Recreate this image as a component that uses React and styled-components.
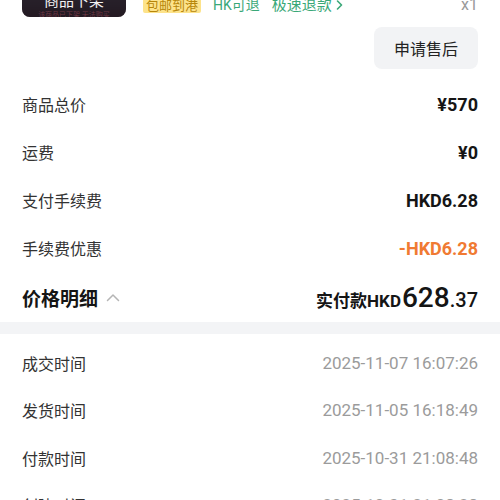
import { createGlobalStyle, styled } from 'styled-components';

const Global = createGlobalStyle`
html, body {
  margin: 0;
  padding: 0;
  background: #ffffff;
  overflow: hidden;
}
body {
  font-family: Roboto, "Noto Sans CJK SC", sans-serif;
  color: #222;
}
`

const Page = styled.div`
width: 500px;
height: 500px;
overflow: hidden;
`

const Card = styled.div`
display: flex;
align-items: stretch;
gap: 17px;
padding: 0 22px;
margin-top: -87px;
`

const Thumb = styled.div`
position: relative;
flex: none;
width: 104px;
height: 104px;
border-radius: 8px;
overflow: hidden;
background: linear-gradient(180deg, #4a4c58 0%, #3a3a47 70%, #2c1f29 100%);
`

const ThumbBadge = styled.div`
position: absolute;
left: 0;
right: 0;
bottom: 0;
height: 26px;
display: flex;
flex-direction: column;
align-items: center;
color: #f2f2f2;
font-size: 15px;
line-height: 20px;
background: rgba(30, 22, 30, 0.55);

span {
  font-size: 7px;
  line-height: 8px;
  color: rgba(200, 90, 110, 0.45);
}
`

const Info = styled.div`
flex: 1;
display: flex;
align-items: flex-end;
padding-bottom: 4px;
`

const Tags = styled.div`
flex: 1;
display: flex;
align-items: center;
gap: 12px;
`

const Tag = styled.span`
font-size: 13px;
line-height: 15px;
padding: 0 3px;
border-radius: 2px;
background: #fde38b;
color: #b7860a;
`

const Green = styled.span`
display: inline-flex;
align-items: center;
gap: 3px;
font-size: ${({ $size }) => $size || 15}px;
line-height: 16px;
color: #3aa878;
`

const Qty = styled.span`
font-size: 16px;
line-height: 16px;
color: #9a9a9a;
`

const Actions = styled.div`
display: flex;
justify-content: flex-end;
padding: 10px 22px 0;
`

const Button = styled.button`
height: 42px;
padding: 0 20px;
border: none;
border-radius: 8px;
background: #f2f3f5;
color: #222;
font-family: "Noto Sans CJK SC", sans-serif;
font-size: 16px;
`

const List = styled.div`
padding: ${({ $top }) => $top || 0}px 22px 0;
`

const Row = styled.div`
display: flex;
align-items: center;
justify-content: space-between;
height: ${({ $h }) => $h || 48}px;
`

const Label = styled.span`
font-family: "Noto Sans CJK SC", sans-serif;
font-size: 16px;
color: #333;
`

const Value = styled.span`
font-size: 18px;
font-weight: 700;
color: ${({ $accent }) => $accent ? '#f07a32' : '#151515'};
`

const Time = styled.span`
font-size: 17px;
color: #9b9b9b;
`

const Heading = styled.span`
display: inline-flex;
align-items: center;
gap: 8px;
font-family: "Noto Sans CJK SC", sans-serif;
font-size: 19px;
font-weight: 700;
color: #151515;
`

const Total = styled.span`
display: inline-flex;
align-items: baseline;
color: #151515;
font-weight: 700;
`

const TotalLabel = styled.span`
font-family: Roboto, "Noto Sans CJK SC", sans-serif;
font-size: 17px;
`

const TotalInt = styled.span`
font-size: 28px;
font-weight: 500;
margin-left: 1px;
`

const TotalDec = styled.span`
font-size: 20px;
font-weight: 500;
`

const Band = styled.div`
height: 12px;
background: #f3f4f6;
`

const prices = [
  ['商品总价', '¥570'],
  ['运费', '¥0'],
  ['支付手续费', 'HKD6.28'],
  ['手续费优惠', '-HKD6.28', true],
]

const times = [
  ['成交时间', '2025-11-07 16:07:26'],
  ['发货时间', '2025-11-05 16:18:49'],
  ['付款时间', '2025-10-31 21:08:48'],
  ['创建时间', '2025-10-31 21:08:28'],
]

export default function App() {
  return (
    <Page>
      <Global />
      <Card>
        <Thumb>
          <ThumbBadge>
            商品下架
            <span>该商品已下架 无法购买</span>
          </ThumbBadge>
        </Thumb>
        <Info>
          <Tags>
            <Tag>包邮到港</Tag>
            <Green $size={14}>HK可退</Green>
            <Green>
              极速退款
              <svg width="9" height="12" viewBox="0 0 9 12" fill="none">
                <path d="M2.5 2l4 4-4 4" stroke="#3aa878" strokeWidth="1.6" strokeLinecap="round" strokeLinejoin="round" />
              </svg>
            </Green>
          </Tags>
          <Qty>x1</Qty>
        </Info>
      </Card>

      <Actions>
        <Button type="button">申请售后</Button>
      </Actions>

      <List $top={11}>
        {prices.map(([label, value, accent]) => (
          <Row key={label}>
            <Label>{label}</Label>
            <Value $accent={accent}>{value}</Value>
          </Row>
        ))}
        <Row $h={50}>
          <Heading>
            价格明细
            <svg width="14" height="9" viewBox="0 0 14 9" fill="none">
              <path d="M1.5 7.5L7 2l5.5 5.5" stroke="#b5b5b5" strokeWidth="1.5" strokeLinecap="round" strokeLinejoin="round" />
            </svg>
          </Heading>
          <Total>
            <TotalLabel>实付款HKD</TotalLabel>
            <TotalInt>628</TotalInt>
            <TotalDec>.37</TotalDec>
          </Total>
        </Row>
      </List>

      <Band />

      <List $top={5}>
        {times.map(([label, value]) => (
          <Row key={label} $h={47.5}>
            <Label>{label}</Label>
            <Time>{value}</Time>
          </Row>
        ))}
      </List>
    </Page>
  );
}
